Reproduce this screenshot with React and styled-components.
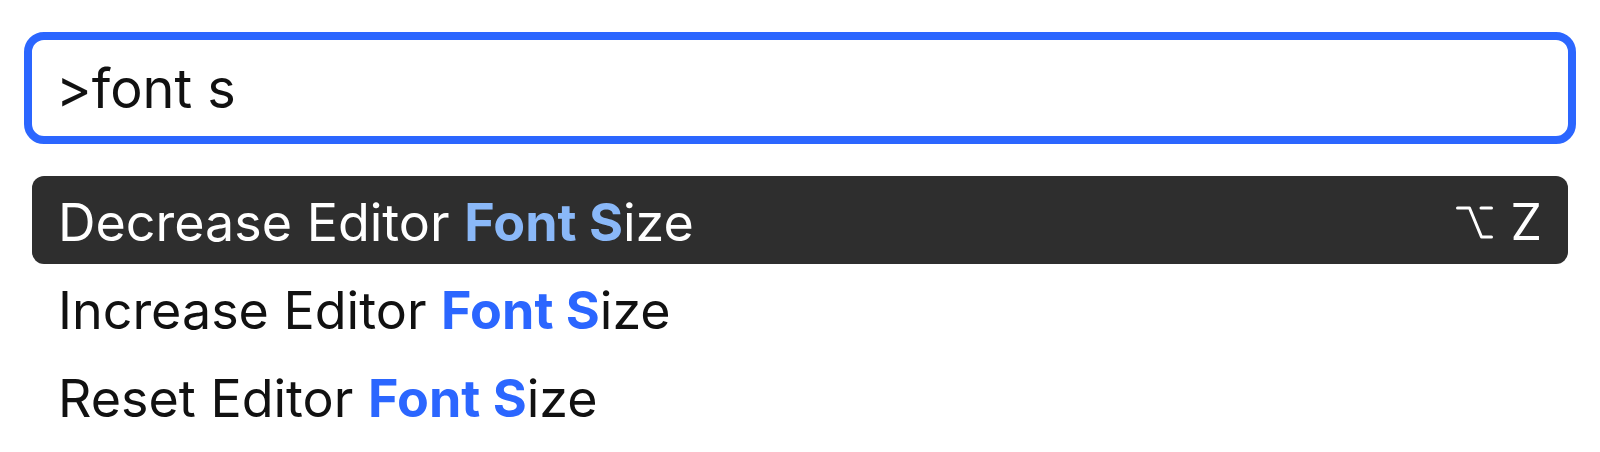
import styled, { createGlobalStyle } from 'styled-components';

const GlobalStyle = createGlobalStyle`
  html, body {
    margin: 0;
    padding: 0;
    background: #ffffff;
  }
  body {
    font-family: Inter, "Noto Sans", "Liberation Sans", sans-serif;
    -webkit-font-smoothing: antialiased;
  }
`;

const commands = [
  { id: 'dec', before: 'Decrease Editor ', match: 'Font S', after: 'ize', keys: 'Z', active: true },
  { id: 'inc', before: 'Increase Editor ', match: 'Font S', after: 'ize' },
  { id: 'reset', before: 'Reset Editor ', match: 'Font S', after: 'ize' },
];

const OptionKey = () => (
  <svg width="37" height="33" viewBox="0 0 37 33" fill="none">
    <path
      d="M1.5 2 H13.5 L25.5 31 H35.5 M25 2 H35.5"
      stroke="currentColor"
      strokeWidth="3"
      strokeLinecap="round"
      strokeLinejoin="round"
    />
  </svg>
);

const App = () => {
  return (
    <>
      <GlobalStyle />
      <Palette>
        <SearchBox>
          <SearchInput defaultValue=">font s" spellCheck={false} />
        </SearchBox>
        <List>
          {commands.map((c) => (
            <Row key={c.id} $active={c.active}>
              <Label>
                {c.before}
                <Match $active={c.active}>{c.match}</Match>
                {c.after}
              </Label>
              {c.keys && (
                <Shortcut>
                  <OptionKey />
                  <span>{c.keys}</span>
                </Shortcut>
              )}
            </Row>
          ))}
        </List>
      </Palette>
    </>
  );
};

export default App;

const Palette = styled.div`
  padding: 32px 24px 0 24px;
  display: flex;
  flex-direction: column;
  gap: 32px;
`;

const SearchBox = styled.div`
  height: 112px;
  border: 8px solid #2b66ff;
  border-radius: 20px;
  box-sizing: border-box;
  display: flex;
  align-items: center;
  padding: 0 24px;
`;

const SearchInput = styled.input`
  width: 100%;
  border: none;
  outline: none;
  background: transparent;
  font-family: Inter, "Noto Sans", sans-serif;
  font-size: 54px;
  color: #111111;
  padding: 0;
  margin-top: 0;
`;

const List = styled.div`
  display: flex;
  flex-direction: column;
  margin: 0 8px;
`;

const Row = styled.div`
  height: 88px;
  display: flex;
  align-items: center;
  justify-content: space-between;
  padding: 0 26px 0 26px;
  border-radius: 12px;
  background: ${(p) => (p.$active ? '#2e2e2e' : 'transparent')};
  color: ${(p) => (p.$active ? '#ffffff' : '#111111')};
`;

const Label = styled.span`
  font-size: 52px;
  white-space: pre;
  padding-top: 4px;
`;

const Match = styled.b`
  font-weight: 700;
  color: ${(p) => (p.$active ? '#8ab8f8' : '#2b66ff')};
`;

const Shortcut = styled.div`
  display: flex;
  align-items: center;
  gap: 18px;
  font-size: 50px;
  padding-top: 4px;
`;
